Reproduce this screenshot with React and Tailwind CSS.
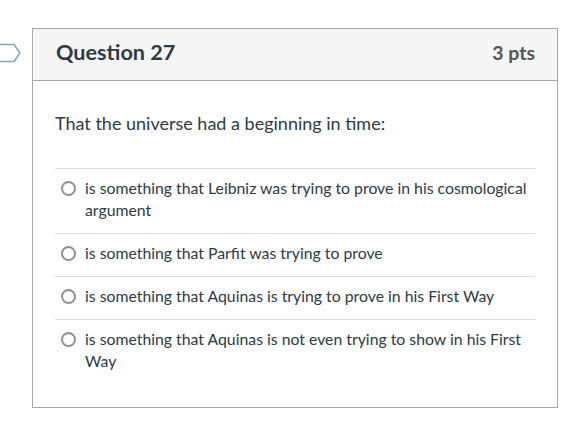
const answers = [
  'is something that Leibniz was trying to prove in his cosmological argument',
  'is something that Parfit was trying to prove',
  'is something that Aquinas is trying to prove in his First Way',
  'is something that Aquinas is not even trying to show in his First Way',
]

export default function App() {
  return (
    <div className="relative h-[438px] w-[584px] bg-white font-['Lato','Noto_Sans',sans-serif] text-[#2d3b45]">
      <svg className="absolute left-0 top-[43px]" width="22" height="20" viewBox="0 0 22 20">
        <path d="M-2 1.5 H14 L20 10 L14 18.5 H-2" fill="white" stroke="#8aa0b8" strokeWidth="1.5" />
      </svg>
      <div className="pl-[32px] pt-[28px]">
        <div className="w-[526px] h-[380px] border border-[#a8a8a8]">
          <div className="flex h-[52px] items-center justify-between border-b border-[#a8a8a8] bg-[#f5f5f5] pl-[23px] pr-[22px] pb-[3px]">
            <h2 className="text-[21.6px] font-bold leading-none">Question 27</h2>
            <span className="text-[19.5px] font-bold leading-none text-[#555]">3 pts</span>
          </div>
          <div className="px-[22px] pt-[30px]">
            <p className="text-[18px] leading-[24px]">That the universe had a beginning in time:</p>
            <div className="mt-[33px]">
              {answers.map((a, i) => (
                <label key={i} className="flex items-start gap-[9px] border-t border-[#ddd] pt-[8px] pb-[12px] pl-[6px]">
                  <span className="mt-[4px] h-[15px] w-[15px] flex-none rounded-full border-2 border-[#8e8e96] bg-white" />
                  <span className="text-[15.8px] leading-[22px]">{a}</span>
                </label>
              ))}
            </div>
          </div>
        </div>
      </div>
    </div>
  )
}
